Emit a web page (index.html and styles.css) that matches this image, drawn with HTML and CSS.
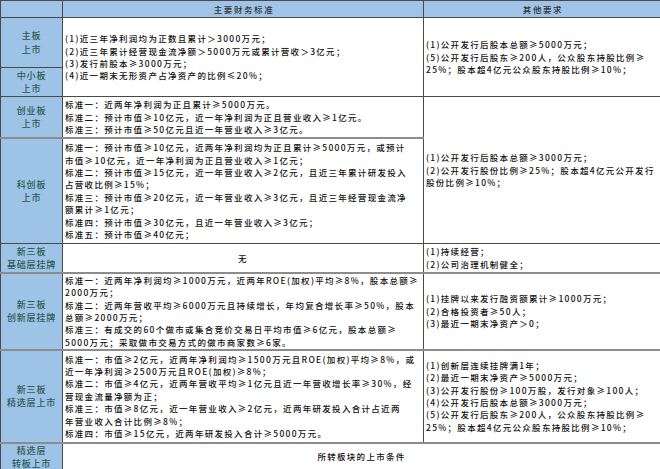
FILE: index.html
```html
<!DOCTYPE html>
<html lang="zh-CN">
<head>
<meta charset="utf-8">
<title>上市标准对比</title>
<link rel="stylesheet" href="styles.css">
</head>
<body>
<table class="grid">
  <colgroup>
    <col class="c-label">
    <col class="c-main">
    <col class="c-other">
  </colgroup>
  <tr class="r-head">
    <th class="label"></th>
    <th class="head">主要财务标准</th>
    <th class="head">其他要求</th>
  </tr>
  <tr class="r-main">
    <td class="label">主板<br>上市</td>
    <td class="txt" rowspan="2">(1)近三年净利润均为正数且累计＞3000万元；<br>(2)近三年累计经营现金流净额＞5000万元或累计营收＞3亿元；<br>(3)发行前股本≥3000万元；<br>(4)近一期末无形资产占净资产的比例≤20%；</td>
    <td class="txt" rowspan="2">(1)公开发行后股本总额≥5000万元；<br>(5)公开发行后股东≥200人，公众股东持股比例≥<br>25%；股本超4亿元公众股东持股比例≥10%；</td>
  </tr>
  <tr class="r-sme">
    <td class="label">中小板<br>上市</td>
  </tr>
  <tr class="r-gem">
    <td class="label">创业板<br>上市</td>
    <td class="txt">标准一：近两年净利润为正且累计≥5000万元。<br>标准二：预计市值≥10亿元，近一年净利润为正且营业收入≥1亿元。<br>标准三：预计市值≥50亿元且近一年营业收入≥3亿元。</td>
    <td class="txt" rowspan="2">(1)公开发行后股本总额≥3000万元；<br>(2)公开发行股份比例≥25%；股本超4亿元公开发行<br>股份比例≥10%；</td>
  </tr>
  <tr class="r-star sep">
    <td class="label">科创板<br>上市</td>
    <td class="txt">标准一：预计市值≥10亿元，近两年净利润均为正且累计≥5000万元，或预计<br>市值≥10亿元，近一年净利润为正且营业收入≥1亿元；<br>标准二：预计市值≥15亿元，近一年营业收入≥2亿元，且近三年累计研发投入<br>占营收比例≥15%；<br>标准三：预计市值≥20亿元，近一年营业收入≥3亿元，且近三年经营现金流净<br>额累计≥1亿元；<br>标准四：预计市值≥30亿元，且近一年营业收入≥3亿元；<br>标准五：预计市值≥40亿元；</td>
  </tr>
  <tr class="r-base">
    <td class="label">新三板<br>基础层挂牌</td>
    <td class="txt center">无</td>
    <td class="txt">(1)持续经营；<br>(2)公司治理机制健全；</td>
  </tr>
  <tr class="r-innov sep">
    <td class="label">新三板<br>创新层挂牌</td>
    <td class="txt tight">标准一：近两年净利润均≥1000万元，近两年ROE(加权)平均≥8%，股本总额≥<br>2000万元；<br>标准二：近两年营收平均≥6000万元且持续增长，年均复合增长率≥50%，股本<br>总额≥2000万元；<br>标准三：有成交的60个做市或集合竞价交易日平均市值≥6亿元，股本总额≥<br>5000万元；采取做市交易方式的做市商家数≥6家。</td>
    <td class="txt">(1)挂牌以来发行融资额累计≥1000万元；<br>(2)合格投资者≥50人；<br>(3)最近一期末净资产＞0；</td>
  </tr>
  <tr class="r-select sep">
    <td class="label">新三板<br>精选层上市</td>
    <td class="txt">标准一：市值≥2亿元，近两年净利润均≥1500万元且ROE(加权)平均≥8%，或<br>近一年净利润≥2500万元且ROE(加权)≥8%；<br>标准二：市值≥4亿元，近两年营收平均≥1亿元且近一年营收增长率≥30%，经<br>营现金流量净额为正；<br>标准三：市值≥8亿元，近一年营业收入≥2亿元，近两年研发投入合计占近两<br>年营业收入合计比例≥8%；<br>标准四：市值≥15亿元，近两年研发投入合计≥5000万元。</td>
    <td class="txt">(1)创新层连续挂牌满1年；<br>(2)最近一期末净资产≥5000万元；<br>(3)公开发行股份≥100万股，发行对象≥100人；<br>(4)公开发行后股本总额≥3000万元；<br>(5)公开发行后股东≥200人，公众股东持股比例≥<br>25%；股本超4亿元公众股东持股比例≥10%；</td>
  </tr>
  <tr class="r-transfer sep">
    <td class="label">精选层<br>转板上市</td>
    <td class="txt center" colspan="2">所转板块的上市条件</td>
  </tr>
</table>
</body>
</html>
```
FILE: styles.css
```css
html, body {
  margin: 0;
  padding: 0;
  background: #ffffff;
}

.grid {
  width: 660px;
  border-collapse: collapse;
  table-layout: fixed;
  font-family: "Noto Sans CJK SC", "Noto Sans", sans-serif;
  font-size: 8.5px;
  font-weight: 500;
  letter-spacing: 1.3px;
  color: #111;
}

.c-label { width: 62px; }
.c-main { width: 361px; }
.c-other { width: 237px; }

.grid th,
.grid td {
  border: 1px solid #4a4a4a;
  padding: 0 0 0 2px;
  vertical-align: middle;
  white-space: nowrap;
  line-height: 12.4px;
  overflow: hidden;
}

.grid th.head {
  background: #9fc4e8;
  color: #333;
  font-weight: 500;
  text-align: center;
  letter-spacing: 1.6px;
}

.grid .label {
  background: #9dc3e6;
  color: #2f5a52;
  text-align: center;
  padding: 0;
  font-size: 9px;
  letter-spacing: 0.8px;
  line-height: 13.1px;
}

.grid th.label { background: #9fc4e8; }

.txt { text-align: left; }
.txt.center { text-align: center; padding: 0; }
.txt.tight { line-height: 12.3px; }

.sep > td { border-top: 2px solid #8c8c8c; }

.r-head { height: 17px; }
.r-main { height: 50px; }
.r-sme { height: 29px; }
.r-gem { height: 41px; }
.r-star { height: 106px; }
.r-base { height: 29px; }
.r-innov { height: 77px; }
.r-select { height: 93px; }
.r-transfer { height: 26px; }
```
